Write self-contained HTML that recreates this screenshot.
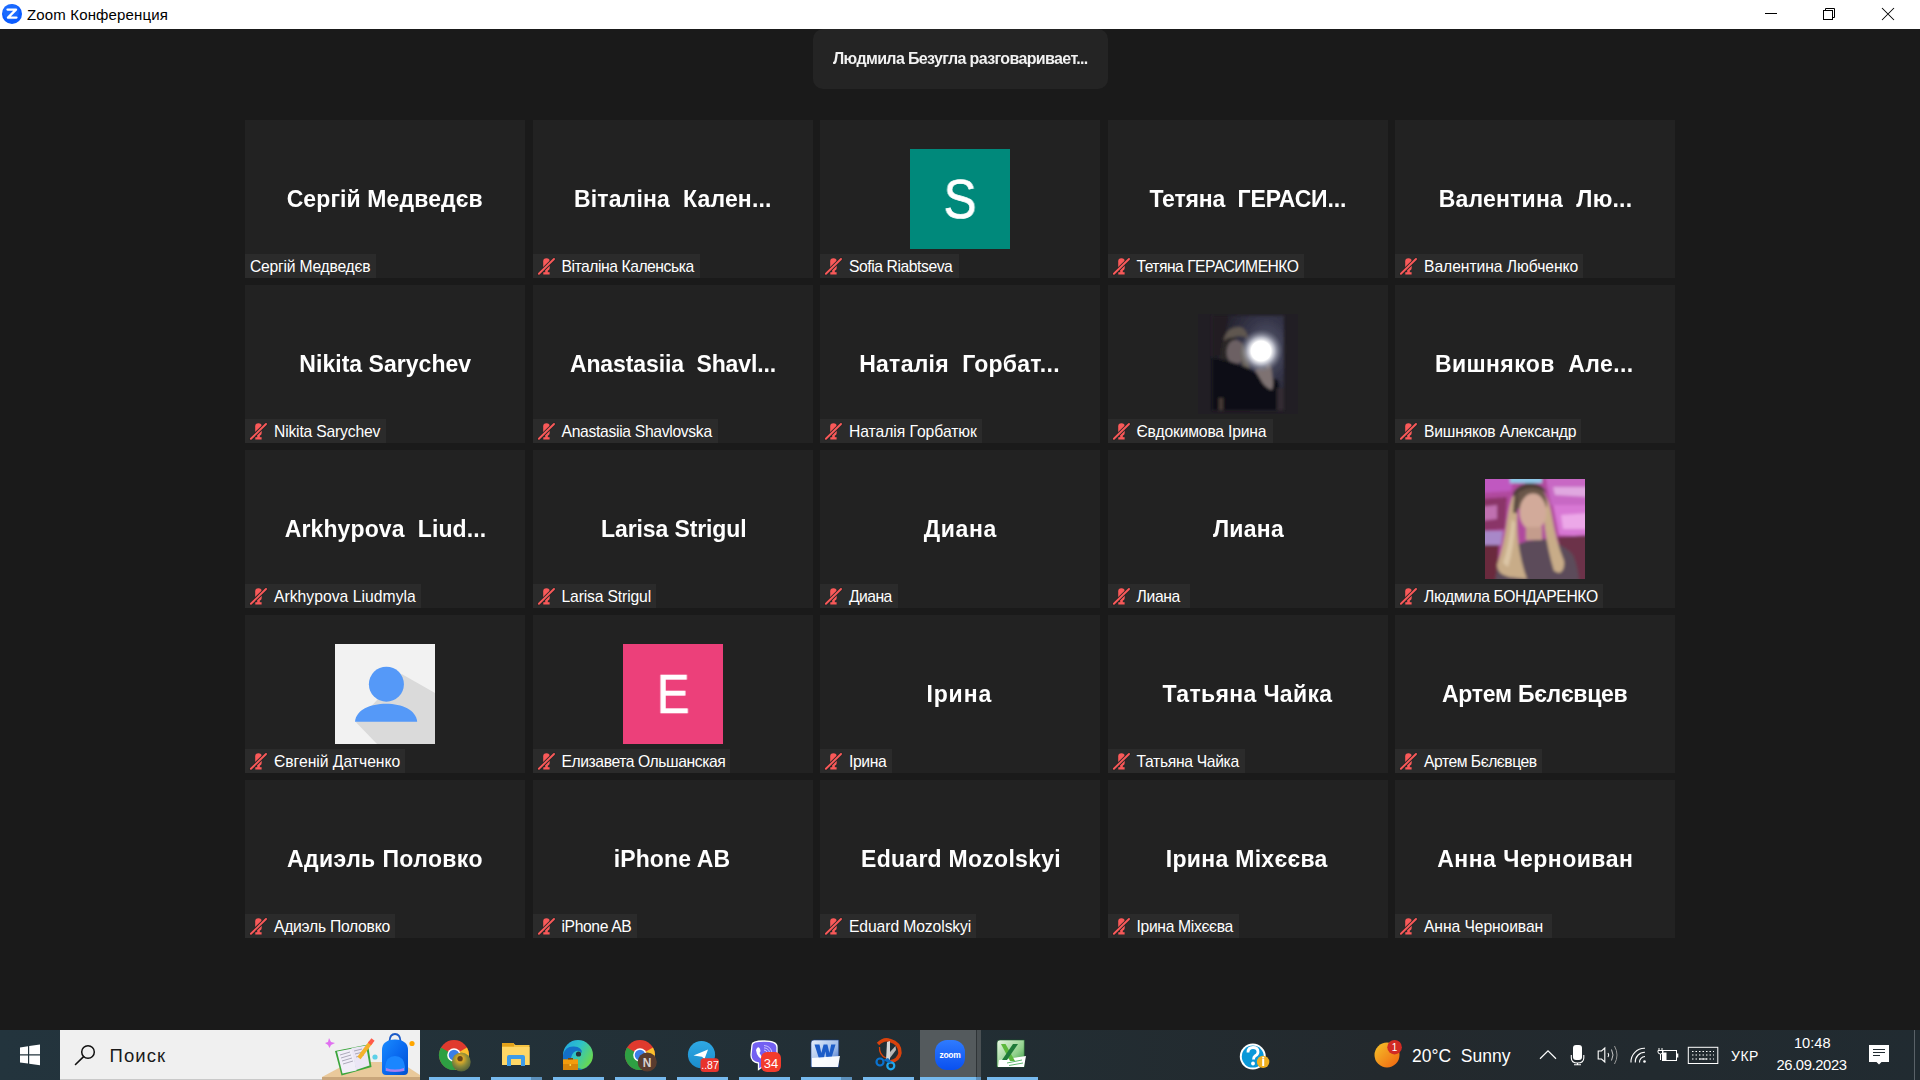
<!DOCTYPE html>
<html><head><meta charset="utf-8">
<style>
*{box-sizing:border-box;margin:0;padding:0}
html,body{width:1920px;height:1080px;overflow:hidden;background:#1a1a1a;font-family:"Liberation Sans",sans-serif}
#title{position:absolute;left:0;top:0;width:1920px;height:29px;background:#fff}
#title .zi{display:none;position:absolute;left:3px;top:5px;width:19px;height:19px;border-radius:50%;background:radial-gradient(circle at 40% 35%,#3c8cff,#0b5cff 60%,#0040d0)}
#title .tt{position:absolute;left:27px;top:6px;font-size:15px;color:#000;white-space:nowrap;letter-spacing:0.15px}
#title .wc{position:absolute;top:0}
#banner{position:absolute;left:813px;top:29px;width:295px;height:60px;background:#242424;border-radius:10px}
#banner span{position:absolute;left:20px;top:21px;font-size:16px;font-weight:bold;color:#f2f2f2;white-space:nowrap;letter-spacing:-0.63px;will-change:transform}
.tile{position:absolute;width:280px;height:157.5px;background:#222}
.big{position:absolute;left:0;right:0;top:66px;text-align:center;font-size:23px;font-weight:bold;color:#fff;white-space:nowrap;line-height:26px;will-change:transform}
.lab{position:absolute;left:0;bottom:0;height:24px;background:#2b2b2b;padding:0 5px 0 5px;display:flex;align-items:center;white-space:nowrap}
.lab span{font-size:15.7px;color:#fff;line-height:24px;position:relative;top:1px}
.lab .mic{margin-right:5px;margin-left:-5px;flex-shrink:0}
.av{position:absolute;left:90px;top:29px;width:100px;height:100px;overflow:hidden}
.av span{position:absolute;left:0;right:0;top:20px;text-align:center;font-size:55px;color:#fff;line-height:60px;transform:scaleX(0.9);-webkit-text-stroke:0.7px #fff;will-change:transform}
#taskbar{position:absolute;left:0;top:1030px;width:1920px;height:50px;background:#212d33}
.tbt{position:absolute;white-space:nowrap;line-height:1;margin-top:-1030px}
</style></head><body>
<div id="title">
 <div class="zi"></div>
 <svg style="position:absolute;left:0;top:0" width="30" height="29"><circle cx="12" cy="13.9" r="10" fill="#0b5cff"/><circle cx="11" cy="12" r="8" fill="#2a78ff" opacity="0.5"/><path d="M7.5 9.6 L16 9.6 L8 17.6 L16.5 17.6" stroke="#fff" stroke-width="2.3" fill="none" stroke-linejoin="round" stroke-linecap="round"/></svg>
 <div class="tt">Zoom Конференция</div>
 <svg style="position:absolute;left:1750px;top:0" width="170" height="29" viewBox="1750 0 170 29">
  <rect x="1765" y="13" width="12" height="1" fill="#000"/>
  <path d="M1825.5 10.5 L1825.5 8.5 L1834.5 8.5 L1834.5 17.5 L1832.5 17.5" stroke="#000" stroke-width="1" fill="none"/>
  <rect x="1823.5" y="10.5" width="9" height="9" stroke="#000" stroke-width="1" fill="none"/>
  <path d="M1882 8 L1894 20 M1894 8 L1882 20" stroke="#000" stroke-width="1.05"/>
 </svg>
</div>
<div id="banner"><span>Людмила Безугла разговаривает...</span></div>
<div class="tile" style="left:245.0px;top:120px"><div class="big" style="letter-spacing:0.107px;transform:translateX(-0.25px)">Сергій Медведєв</div><div class="lab" style="width:131.00px"><span style="letter-spacing:-0.241px">Сергій Медведєв</span></div></div>
<div class="tile" style="left:532.5px;top:120px"><div class="big" style="letter-spacing:0.156px;transform:translateX(-0.25px)">Віталіна&nbsp; Кален...</div><div class="lab" style="width:167.10px"><svg class="mic" width="24" height="24" viewBox="0 0.1 24 24"><rect x="10.2" y="4.3" width="6.5" height="12.6" rx="3.2" fill="#fa5959"/><rect x="12.2" y="15" width="2.6" height="4" fill="#fa5959"/><rect x="10.3" y="18.3" width="6.3" height="2.3" fill="#fa5959"/><path d="M5.9 19.9L21 5.1" stroke="#262626" stroke-width="3.8" stroke-linecap="round"/><path d="M5.9 19.9L21 5.1" stroke="#fa5959" stroke-width="1.9" stroke-linecap="round"/></svg><span style="letter-spacing:-0.457px">Віталіна Каленська</span></div></div>
<div class="tile" style="left:820.0px;top:120px"><div class="av" style="background:#00897b"><span>S</span></div><div class="lab" style="width:138.75px"><svg class="mic" width="24" height="24" viewBox="0 0.1 24 24"><rect x="10.2" y="4.3" width="6.5" height="12.6" rx="3.2" fill="#fa5959"/><rect x="12.2" y="15" width="2.6" height="4" fill="#fa5959"/><rect x="10.3" y="18.3" width="6.3" height="2.3" fill="#fa5959"/><path d="M5.9 19.9L21 5.1" stroke="#262626" stroke-width="3.8" stroke-linecap="round"/><path d="M5.9 19.9L21 5.1" stroke="#fa5959" stroke-width="1.9" stroke-linecap="round"/></svg><span style="letter-spacing:-0.431px">Sofia Riabtseva</span></div></div>
<div class="tile" style="left:1107.5px;top:120px"><div class="big" style="letter-spacing:-0.167px;transform:translateX(-0.25px)">Тетяна&nbsp; ГЕРАСИ...</div><div class="lab" style="width:196.50px"><svg class="mic" width="24" height="24" viewBox="0 0.1 24 24"><rect x="10.2" y="4.3" width="6.5" height="12.6" rx="3.2" fill="#fa5959"/><rect x="12.2" y="15" width="2.6" height="4" fill="#fa5959"/><rect x="10.3" y="18.3" width="6.3" height="2.3" fill="#fa5959"/><path d="M5.9 19.9L21 5.1" stroke="#262626" stroke-width="3.8" stroke-linecap="round"/><path d="M5.9 19.9L21 5.1" stroke="#fa5959" stroke-width="1.9" stroke-linecap="round"/></svg><span style="letter-spacing:-0.526px">Тетяна ГЕРАСИМЕНКО</span></div></div>
<div class="tile" style="left:1395.0px;top:120px"><div class="big" style="letter-spacing:0.214px;transform:translateX(0.50px)">Валентина&nbsp; Лю...</div><div class="lab" style="width:188.00px"><svg class="mic" width="24" height="24" viewBox="0 0.1 24 24"><rect x="10.2" y="4.3" width="6.5" height="12.6" rx="3.2" fill="#fa5959"/><rect x="12.2" y="15" width="2.6" height="4" fill="#fa5959"/><rect x="10.3" y="18.3" width="6.3" height="2.3" fill="#fa5959"/><path d="M5.9 19.9L21 5.1" stroke="#262626" stroke-width="3.8" stroke-linecap="round"/><path d="M5.9 19.9L21 5.1" stroke="#fa5959" stroke-width="1.9" stroke-linecap="round"/></svg><span style="letter-spacing:-0.063px">Валентина Любченко</span></div></div>
<div class="tile" style="left:245.0px;top:285px"><div class="big" style="letter-spacing:0.036px;transform:translateX(0.25px)">Nikita Sarychev</div><div class="lab" style="width:140.75px"><svg class="mic" width="24" height="24" viewBox="0 0.1 24 24"><rect x="10.2" y="4.3" width="6.5" height="12.6" rx="3.2" fill="#fa5959"/><rect x="12.2" y="15" width="2.6" height="4" fill="#fa5959"/><rect x="10.3" y="18.3" width="6.3" height="2.3" fill="#fa5959"/><path d="M5.9 19.9L21 5.1" stroke="#262626" stroke-width="3.8" stroke-linecap="round"/><path d="M5.9 19.9L21 5.1" stroke="#fa5959" stroke-width="1.9" stroke-linecap="round"/></svg><span style="letter-spacing:-0.190px">Nikita Sarychev</span></div></div>
<div class="tile" style="left:532.5px;top:285px"><div class="big" style="letter-spacing:-0.111px;transform:translateX(-0.00px)">Anastasiia&nbsp; Shavl...</div><div class="lab" style="width:185.00px"><svg class="mic" width="24" height="24" viewBox="0 0.1 24 24"><rect x="10.2" y="4.3" width="6.5" height="12.6" rx="3.2" fill="#fa5959"/><rect x="12.2" y="15" width="2.6" height="4" fill="#fa5959"/><rect x="10.3" y="18.3" width="6.3" height="2.3" fill="#fa5959"/><path d="M5.9 19.9L21 5.1" stroke="#262626" stroke-width="3.8" stroke-linecap="round"/><path d="M5.9 19.9L21 5.1" stroke="#fa5959" stroke-width="1.9" stroke-linecap="round"/></svg><span style="letter-spacing:-0.317px">Anastasiia Shavlovska</span></div></div>
<div class="tile" style="left:820.0px;top:285px"><div class="big" style="letter-spacing:0.250px;transform:translateX(-0.50px)">Наталія&nbsp; Горбат...</div><div class="lab" style="width:161.75px"><svg class="mic" width="24" height="24" viewBox="0 0.1 24 24"><rect x="10.2" y="4.3" width="6.5" height="12.6" rx="3.2" fill="#fa5959"/><rect x="12.2" y="15" width="2.6" height="4" fill="#fa5959"/><rect x="10.3" y="18.3" width="6.3" height="2.3" fill="#fa5959"/><path d="M5.9 19.9L21 5.1" stroke="#262626" stroke-width="3.8" stroke-linecap="round"/><path d="M5.9 19.9L21 5.1" stroke="#fa5959" stroke-width="1.9" stroke-linecap="round"/></svg><span style="letter-spacing:-0.048px">Наталія Горбатюк</span></div></div>
<div class="tile" style="left:1107.5px;top:285px"><div class="av"><svg width="100" height="100" viewBox="0 0 100 100"><defs><filter id="bl1" x="-20%" y="-20%" width="140%" height="140%"><feGaussianBlur stdDeviation="1.5"/></filter><radialGradient id="fl1"><stop offset="0" stop-color="#fff"/><stop offset="0.45" stop-color="#fff"/><stop offset="0.62" stop-color="#d8dae4" stop-opacity="0.75"/><stop offset="1" stop-color="#6a6e80" stop-opacity="0"/></radialGradient><radialGradient id="sky1" cx="0.75" cy="0.35" r="0.7"><stop offset="0" stop-color="#5c5e72"/><stop offset="0.45" stop-color="#36364a"/><stop offset="1" stop-color="#1e1c24"/></radialGradient></defs><rect width="100" height="100" fill="#211e24"/><g filter="url(#bl1)"><rect x="14" y="1.5" width="72" height="95" fill="url(#sky1)"/><path d="M14 1.5 L30 1.5 L26 40 L14 42 Z" fill="#231a20"/><path d="M26 24 Q30 12 42 13 Q50 15 50 26 Q48 22 40 22 Q30 24 26 34 Z" fill="#5e5650"/><path d="M24 30 Q28 22 38 24 L30 50 L22 48 Z" fill="#2a2626"/><ellipse cx="37.5" cy="38" rx="9" ry="12" fill="#6c6064"/><path d="M44 28 Q50 42 52 56 Q54 64 52 68 L47 66 Q45 52 42 40 Z" fill="#6a645c"/><path d="M14 44 Q30 46 40 50 L50 54 L60 60 L80 66 L86 96 L14 96 Z" fill="#0d1018"/><path d="M57 56 Q62 53 67 55 L70 49 Q74 52 74 60 Q76 70 74 76 Q68 74 64 68 Z" fill="#7e7272"/><rect x="79" y="74" width="7" height="22" fill="#302c30"/><rect x="21" y="84" width="4" height="12" fill="#463a36"/></g><circle cx="63" cy="37" r="22" fill="url(#fl1)"/></svg></div><div class="lab" style="width:165.00px"><svg class="mic" width="24" height="24" viewBox="0 0.1 24 24"><rect x="10.2" y="4.3" width="6.5" height="12.6" rx="3.2" fill="#fa5959"/><rect x="12.2" y="15" width="2.6" height="4" fill="#fa5959"/><rect x="10.3" y="18.3" width="6.3" height="2.3" fill="#fa5959"/><path d="M5.9 19.9L21 5.1" stroke="#262626" stroke-width="3.8" stroke-linecap="round"/><path d="M5.9 19.9L21 5.1" stroke="#fa5959" stroke-width="1.9" stroke-linecap="round"/></svg><span style="letter-spacing:-0.194px">Євдокимова Ірина</span></div></div>
<div class="tile" style="left:1395.0px;top:285px"><div class="big" style="letter-spacing:0.393px;transform:translateX(-0.75px)">Вишняков&nbsp; Але...</div><div class="lab" style="width:186.00px"><svg class="mic" width="24" height="24" viewBox="0 0.1 24 24"><rect x="10.2" y="4.3" width="6.5" height="12.6" rx="3.2" fill="#fa5959"/><rect x="12.2" y="15" width="2.6" height="4" fill="#fa5959"/><rect x="10.3" y="18.3" width="6.3" height="2.3" fill="#fa5959"/><path d="M5.9 19.9L21 5.1" stroke="#262626" stroke-width="3.8" stroke-linecap="round"/><path d="M5.9 19.9L21 5.1" stroke="#fa5959" stroke-width="1.9" stroke-linecap="round"/></svg><span style="letter-spacing:-0.200px">Вишняков Александр</span></div></div>
<div class="tile" style="left:245.0px;top:450px"><div class="big" style="letter-spacing:0.125px;transform:translateX(0.50px)">Arkhypova&nbsp; Liud...</div><div class="lab" style="width:175.50px"><svg class="mic" width="24" height="24" viewBox="0 0.1 24 24"><rect x="10.2" y="4.3" width="6.5" height="12.6" rx="3.2" fill="#fa5959"/><rect x="12.2" y="15" width="2.6" height="4" fill="#fa5959"/><rect x="10.3" y="18.3" width="6.3" height="2.3" fill="#fa5959"/><path d="M5.9 19.9L21 5.1" stroke="#262626" stroke-width="3.8" stroke-linecap="round"/><path d="M5.9 19.9L21 5.1" stroke="#fa5959" stroke-width="1.9" stroke-linecap="round"/></svg><span style="letter-spacing:0.029px">Arkhypova Liudmyla</span></div></div>
<div class="tile" style="left:532.5px;top:450px"><div class="big" style="letter-spacing:-0.115px;transform:translateX(0.75px)">Larisa Strigul</div><div class="lab" style="width:123.00px"><svg class="mic" width="24" height="24" viewBox="0 0.1 24 24"><rect x="10.2" y="4.3" width="6.5" height="12.6" rx="3.2" fill="#fa5959"/><rect x="12.2" y="15" width="2.6" height="4" fill="#fa5959"/><rect x="10.3" y="18.3" width="6.3" height="2.3" fill="#fa5959"/><path d="M5.9 19.9L21 5.1" stroke="#262626" stroke-width="3.8" stroke-linecap="round"/><path d="M5.9 19.9L21 5.1" stroke="#fa5959" stroke-width="1.9" stroke-linecap="round"/></svg><span style="letter-spacing:-0.148px">Larisa Strigul</span></div></div>
<div class="tile" style="left:820.0px;top:450px"><div class="big" style="letter-spacing:0.625px;transform:translateX(0.25px)">Диана</div><div class="lab" style="width:78.00px"><svg class="mic" width="24" height="24" viewBox="0 0.1 24 24"><rect x="10.2" y="4.3" width="6.5" height="12.6" rx="3.2" fill="#fa5959"/><rect x="12.2" y="15" width="2.6" height="4" fill="#fa5959"/><rect x="10.3" y="18.3" width="6.3" height="2.3" fill="#fa5959"/><path d="M5.9 19.9L21 5.1" stroke="#262626" stroke-width="3.8" stroke-linecap="round"/><path d="M5.9 19.9L21 5.1" stroke="#fa5959" stroke-width="1.9" stroke-linecap="round"/></svg><span style="letter-spacing:-0.556px">Диана</span></div></div>
<div class="tile" style="left:1107.5px;top:450px"><div class="big" style="letter-spacing:0.250px;transform:translateX(0.50px)">Лиана</div><div class="lab" style="width:82.00px"><svg class="mic" width="24" height="24" viewBox="0 0.1 24 24"><rect x="10.2" y="4.3" width="6.5" height="12.6" rx="3.2" fill="#fa5959"/><rect x="12.2" y="15" width="2.6" height="4" fill="#fa5959"/><rect x="10.3" y="18.3" width="6.3" height="2.3" fill="#fa5959"/><path d="M5.9 19.9L21 5.1" stroke="#262626" stroke-width="3.8" stroke-linecap="round"/><path d="M5.9 19.9L21 5.1" stroke="#fa5959" stroke-width="1.9" stroke-linecap="round"/></svg><span style="letter-spacing:-0.333px">Лиана</span></div></div>
<div class="tile" style="left:1395.0px;top:450px"><div class="av"><svg width="100" height="100" viewBox="0 0 100 100"><defs><filter id="bl2" x="-20%" y="-20%" width="140%" height="140%"><feGaussianBlur stdDeviation="1.6"/></filter></defs><g filter="url(#bl2)"><rect x="-5" y="-5" width="110" height="110" fill="#b04a9e"/><path d="M-5 -5 L30 -5 L26 12 L-5 14 Z" fill="#c058c0"/><path d="M-5 20 L22 18 L20 50 L-5 52 Z" fill="#8a3468"/><path d="M-5 28 L12 26 L12 40 L-5 42 Z" fill="#c070b0"/><path d="M-5 52 L18 52 L16 66 L-5 66 Z" fill="#a888c8"/><path d="M-5 66 L14 66 L12 105 L-5 105 Z" fill="#6a2a3c"/><rect x="25" y="-5" width="32" height="9" fill="#90c8e8"/><path d="M60 -5 L105 -5 L105 30 L66 26 Z" fill="#c868c4"/><path d="M68 8 L105 8 L105 18 L70 16 Z" fill="#e0a8e0"/><path d="M68 26 L105 26 L105 58 L74 56 Z" fill="#d878d4"/><path d="M76 36 L105 34 L105 50 L78 50 Z" fill="#eca8e8"/><path d="M72 58 L105 56 L105 105 L86 105 Z" fill="#6c3048"/><path d="M10 105 Q12 80 22 72 Q34 64 42 62 L60 60 Q80 66 88 76 Q94 90 94 105 Z" fill="#5c4c5a"/><path d="M30 12 Q25 20 22 42 Q19 66 12 86 Q12 95 24 98 L42 100 Q36 84 33 62 Q31 40 33 20 Z" fill="#c8ac88"/><path d="M58 12 Q64 20 67 38 Q71 62 79 82 Q80 92 74 94 L69 92 Q63 72 60 50 Q58 30 56 16 Z" fill="#c8ac88"/><path d="M31 30 Q30 8 46 6 Q62 7 62 28 Z" fill="#6a5648"/><path d="M28 14 Q34 4 46 4 Q58 5 62 14 Q54 9 46 9 Q36 10 28 18 Z" fill="#4e3e38"/><path d="M29 20 Q30 14 34 12 L32 34 L28 34 Z" fill="#5a4a40"/><ellipse cx="48" cy="33" rx="13.5" ry="18.5" fill="#d2aa9a"/><rect x="41" y="48" width="16" height="13" fill="#c49c8c"/><path d="M27 40 Q24 66 18 84 L23 88 Q29 68 30 44 Z" fill="#dcc6a6"/></g></svg></div><div class="lab" style="width:208.00px"><svg class="mic" width="24" height="24" viewBox="0 0.1 24 24"><rect x="10.2" y="4.3" width="6.5" height="12.6" rx="3.2" fill="#fa5959"/><rect x="12.2" y="15" width="2.6" height="4" fill="#fa5959"/><rect x="10.3" y="18.3" width="6.3" height="2.3" fill="#fa5959"/><path d="M5.9 19.9L21 5.1" stroke="#262626" stroke-width="3.8" stroke-linecap="round"/><path d="M5.9 19.9L21 5.1" stroke="#fa5959" stroke-width="1.9" stroke-linecap="round"/></svg><span style="letter-spacing:-0.394px">Людмила БОНДАРЕНКО</span></div></div>
<div class="tile" style="left:245.0px;top:615px"><div class="av" style="background:#f2f2f2"><svg width="100" height="100" viewBox="0 0 100 100"><path d="M66.7 29.9 L100 49 L100 100 L42 100 L21 78.3 Z" fill="#dadada"/><circle cx="51.4" cy="40.2" r="17.5" fill="#5599f8"/><path d="M20 77.8 C21 66 35 59.8 51.2 59.8 C67 59.8 81 66 82.2 77.8 Z" fill="#5599f8"/></svg></div><div class="lab" style="width:159.50px"><svg class="mic" width="24" height="24" viewBox="0 0.1 24 24"><rect x="10.2" y="4.3" width="6.5" height="12.6" rx="3.2" fill="#fa5959"/><rect x="12.2" y="15" width="2.6" height="4" fill="#fa5959"/><rect x="10.3" y="18.3" width="6.3" height="2.3" fill="#fa5959"/><path d="M5.9 19.9L21 5.1" stroke="#262626" stroke-width="3.8" stroke-linecap="round"/><path d="M5.9 19.9L21 5.1" stroke="#fa5959" stroke-width="1.9" stroke-linecap="round"/></svg><span style="letter-spacing:-0.016px">Євгеній Датченко</span></div></div>
<div class="tile" style="left:532.5px;top:615px"><div class="av" style="background:#ec407a"><span>E</span></div><div class="lab" style="width:197.70px"><svg class="mic" width="24" height="24" viewBox="0 0.1 24 24"><rect x="10.2" y="4.3" width="6.5" height="12.6" rx="3.2" fill="#fa5959"/><rect x="12.2" y="15" width="2.6" height="4" fill="#fa5959"/><rect x="10.3" y="18.3" width="6.3" height="2.3" fill="#fa5959"/><path d="M5.9 19.9L21 5.1" stroke="#262626" stroke-width="3.8" stroke-linecap="round"/><path d="M5.9 19.9L21 5.1" stroke="#fa5959" stroke-width="1.9" stroke-linecap="round"/></svg><span style="letter-spacing:-0.426px">Елизавета Ольшанская</span></div></div>
<div class="tile" style="left:820.0px;top:615px"><div class="big" style="letter-spacing:0.875px;transform:translateX(-0.75px)">Ірина</div><div class="lab" style="width:71.75px"><svg class="mic" width="24" height="24" viewBox="0 0.1 24 24"><rect x="10.2" y="4.3" width="6.5" height="12.6" rx="3.2" fill="#fa5959"/><rect x="12.2" y="15" width="2.6" height="4" fill="#fa5959"/><rect x="10.3" y="18.3" width="6.3" height="2.3" fill="#fa5959"/><path d="M5.9 19.9L21 5.1" stroke="#262626" stroke-width="3.8" stroke-linecap="round"/><path d="M5.9 19.9L21 5.1" stroke="#fa5959" stroke-width="1.9" stroke-linecap="round"/></svg><span style="letter-spacing:-0.389px">Ірина</span></div></div>
<div class="tile" style="left:1107.5px;top:615px"><div class="big" style="letter-spacing:0.333px;transform:translateX(-0.50px)">Татьяна Чайка</div><div class="lab" style="width:137.00px"><svg class="mic" width="24" height="24" viewBox="0 0.1 24 24"><rect x="10.2" y="4.3" width="6.5" height="12.6" rx="3.2" fill="#fa5959"/><rect x="12.2" y="15" width="2.6" height="4" fill="#fa5959"/><rect x="10.3" y="18.3" width="6.3" height="2.3" fill="#fa5959"/><path d="M5.9 19.9L21 5.1" stroke="#262626" stroke-width="3.8" stroke-linecap="round"/><path d="M5.9 19.9L21 5.1" stroke="#fa5959" stroke-width="1.9" stroke-linecap="round"/></svg><span style="letter-spacing:-0.340px">Татьяна Чайка</span></div></div>
<div class="tile" style="left:1395.0px;top:615px"><div class="big" style="letter-spacing:-0.269px;transform:translateX(-0.25px)">Артем Бєлєвцев</div><div class="lab" style="width:146.80px"><svg class="mic" width="24" height="24" viewBox="0 0.1 24 24"><rect x="10.2" y="4.3" width="6.5" height="12.6" rx="3.2" fill="#fa5959"/><rect x="12.2" y="15" width="2.6" height="4" fill="#fa5959"/><rect x="10.3" y="18.3" width="6.3" height="2.3" fill="#fa5959"/><path d="M5.9 19.9L21 5.1" stroke="#262626" stroke-width="3.8" stroke-linecap="round"/><path d="M5.9 19.9L21 5.1" stroke="#fa5959" stroke-width="1.9" stroke-linecap="round"/></svg><span style="letter-spacing:-0.481px">Артем Бєлєвцев</span></div></div>
<div class="tile" style="left:245.0px;top:780px"><div class="big" style="letter-spacing:0.385px;transform:translateX(-0.00px)">Адиэль Половко</div><div class="lab" style="width:150.00px"><svg class="mic" width="24" height="24" viewBox="0 0.1 24 24"><rect x="10.2" y="4.3" width="6.5" height="12.6" rx="3.2" fill="#fa5959"/><rect x="12.2" y="15" width="2.6" height="4" fill="#fa5959"/><rect x="10.3" y="18.3" width="6.3" height="2.3" fill="#fa5959"/><path d="M5.9 19.9L21 5.1" stroke="#262626" stroke-width="3.8" stroke-linecap="round"/><path d="M5.9 19.9L21 5.1" stroke="#fa5959" stroke-width="1.9" stroke-linecap="round"/></svg><span style="letter-spacing:-0.259px">Адиэль Половко</span></div></div>
<div class="tile" style="left:532.5px;top:780px"><div class="big" style="letter-spacing:0.125px;transform:translateX(-1.00px)">iPhone AB</div><div class="lab" style="width:104.25px"><svg class="mic" width="24" height="24" viewBox="0 0.1 24 24"><rect x="10.2" y="4.3" width="6.5" height="12.6" rx="3.2" fill="#fa5959"/><rect x="12.2" y="15" width="2.6" height="4" fill="#fa5959"/><rect x="10.3" y="18.3" width="6.3" height="2.3" fill="#fa5959"/><path d="M5.9 19.9L21 5.1" stroke="#262626" stroke-width="3.8" stroke-linecap="round"/><path d="M5.9 19.9L21 5.1" stroke="#fa5959" stroke-width="1.9" stroke-linecap="round"/></svg><span style="letter-spacing:-0.382px">iPhone AB</span></div></div>
<div class="tile" style="left:820.0px;top:780px"><div class="big" style="letter-spacing:0.267px;transform:translateX(1.00px)">Eduard Mozolskyi</div><div class="lab" style="width:155.50px"><svg class="mic" width="24" height="24" viewBox="0 0.1 24 24"><rect x="10.2" y="4.3" width="6.5" height="12.6" rx="3.2" fill="#fa5959"/><rect x="12.2" y="15" width="2.6" height="4" fill="#fa5959"/><rect x="10.3" y="18.3" width="6.3" height="2.3" fill="#fa5959"/><path d="M5.9 19.9L21 5.1" stroke="#262626" stroke-width="3.8" stroke-linecap="round"/><path d="M5.9 19.9L21 5.1" stroke="#fa5959" stroke-width="1.9" stroke-linecap="round"/></svg><span style="letter-spacing:-0.097px">Eduard Mozolskyi</span></div></div>
<div class="tile" style="left:1107.5px;top:780px"><div class="big" style="letter-spacing:0.292px;transform:translateX(-1.25px)">Ірина Міхєєва</div><div class="lab" style="width:131.25px"><svg class="mic" width="24" height="24" viewBox="0 0.1 24 24"><rect x="10.2" y="4.3" width="6.5" height="12.6" rx="3.2" fill="#fa5959"/><rect x="12.2" y="15" width="2.6" height="4" fill="#fa5959"/><rect x="10.3" y="18.3" width="6.3" height="2.3" fill="#fa5959"/><path d="M5.9 19.9L21 5.1" stroke="#262626" stroke-width="3.8" stroke-linecap="round"/><path d="M5.9 19.9L21 5.1" stroke="#fa5959" stroke-width="1.9" stroke-linecap="round"/></svg><span style="letter-spacing:-0.340px">Ірина Міхєєва</span></div></div>
<div class="tile" style="left:1395.0px;top:780px"><div class="big" style="letter-spacing:0.500px;transform:translateX(0.25px)">Анна Черноиван</div><div class="lab" style="width:157.00px"><svg class="mic" width="24" height="24" viewBox="0 0.1 24 24"><rect x="10.2" y="4.3" width="6.5" height="12.6" rx="3.2" fill="#fa5959"/><rect x="12.2" y="15" width="2.6" height="4" fill="#fa5959"/><rect x="10.3" y="18.3" width="6.3" height="2.3" fill="#fa5959"/><path d="M5.9 19.9L21 5.1" stroke="#262626" stroke-width="3.8" stroke-linecap="round"/><path d="M5.9 19.9L21 5.1" stroke="#fa5959" stroke-width="1.9" stroke-linecap="round"/></svg><span style="letter-spacing:-0.096px">Анна Черноиван</span></div></div>
<div id="taskbar">
 <svg style="position:absolute;left:0;top:0" width="1920" height="50" viewBox="0 1030 1920 50">
  <defs>
   <linearGradient id="tbg" x1="0" x2="1" y1="0" y2="0">
    <stop offset="0" stop-color="#23343d"/><stop offset="0.5" stop-color="#222e34"/><stop offset="0.72" stop-color="#23292d"/><stop offset="1" stop-color="#212b31"/>
   </linearGradient>
   <radialGradient id="sunfl" cx="0.45" cy="0.35" r="0.7">
    <stop offset="0" stop-color="#6b4a1a"/><stop offset="0.25" stop-color="#d8a82a"/><stop offset="0.55" stop-color="#8a8a3a"/><stop offset="1" stop-color="#4a5a3a"/>
   </radialGradient>
   <linearGradient id="edgeg" x1="0" y1="0" x2="1" y2="0.6">
    <stop offset="0" stop-color="#1fa2e6"/><stop offset="0.5" stop-color="#2ec3c8"/><stop offset="1" stop-color="#6ad84e"/>
   </linearGradient>
   <linearGradient id="tgg" x1="0" y1="0" x2="0" y2="1">
    <stop offset="0" stop-color="#2fa8e4"/><stop offset="1" stop-color="#1a8ccc"/>
   </linearGradient>
   <linearGradient id="sung" x1="0" y1="0" x2="1" y2="1">
    <stop offset="0" stop-color="#f5c42a"/><stop offset="1" stop-color="#f0620f"/>
   </linearGradient>
   <linearGradient id="bpg" x1="0" y1="0" x2="1" y2="1">
    <stop offset="0" stop-color="#1a8cff"/><stop offset="0.5" stop-color="#0a6af0"/><stop offset="1" stop-color="#0050d0"/>
   </linearGradient>
   <linearGradient id="wordg" x1="0" y1="0" x2="1" y2="1">
    <stop offset="0" stop-color="#e8f0fb"/><stop offset="0.6" stop-color="#9ab8e8"/><stop offset="1" stop-color="#2a5cc0"/>
   </linearGradient>
   <linearGradient id="xlg" x1="0" y1="0" x2="1" y2="1">
    <stop offset="0" stop-color="#eaf6e6"/><stop offset="0.6" stop-color="#8fd08a"/><stop offset="1" stop-color="#2a8a3a"/>
   </linearGradient>
   <linearGradient id="zmg" x1="0" y1="0" x2="0" y2="1">
    <stop offset="0" stop-color="#2f7bff"/><stop offset="1" stop-color="#0950f0"/>
   </linearGradient>
  </defs>
  <rect x="0" y="1030" width="1920" height="50" fill="url(#tbg)"/>
  <!-- windows logo -->
  <path d="M20 1047.5 L28 1046.3 L28 1054.3 L20 1054.3 Z M29.2 1046.1 L40 1044.6 L40 1054.3 L29.2 1054.3 Z M20 1055.5 L28 1055.5 L28 1063.6 L20 1062.4 Z M29.2 1055.5 L40 1055.5 L40 1065.2 L29.2 1063.8 Z" fill="#fff"/>
  <!-- search box -->
  <rect x="60" y="1030" width="360" height="50" fill="#f0f0f0"/>
  <rect x="60" y="1079" width="360" height="1" fill="#c9c9c9"/>
  <circle cx="88" cy="1052" r="6.3" fill="none" stroke="#111" stroke-width="1.5"/>
  <path d="M83.6 1056.6 L75.5 1064.5" stroke="#111" stroke-width="1.6" stroke-linecap="round"/>
  <!-- search illustration -->
  <path d="M322 1080 L322 1077 L350 1062 L400 1062 L420 1075 L420 1080 Z" fill="#e9c99b"/>
  <rect x="322" y="1077" width="98" height="3" fill="#c9a67b"/>
  <path d="M335 1051 L368 1044.5 L371.5 1067 L341.5 1075.5 Z" fill="#3aa53a"/>
  <path d="M337 1051.5 L352.5 1048.5 L356.5 1070.5 L342.5 1073.5 Z" fill="#f1eef8"/>
  <path d="M351.5 1048 L366 1045.5 L369.5 1065.5 L356 1070 Z" fill="#ebe6f5"/>
  <path d="M340 1055 L350 1052 M341 1058 L351 1055 M342 1061 L352 1058 M343 1064 L353 1061 M354 1051 L362 1049 M355 1054 L363 1052 M356 1057 L364 1055" stroke="#9a98aa" stroke-width="0.8"/>
  <path d="M359 1058 L371 1042" stroke="#f5b22a" stroke-width="4" stroke-linecap="butt"/>
  <path d="M369.5 1044 L373 1039.5" stroke="#ff5a4a" stroke-width="4"/>
  <path d="M329 1038 L331 1042 L335 1043 L331 1045 L329.5 1048 L328 1045 L325 1043 L328 1042 Z" fill="#e070f0"/>
  <circle cx="375" cy="1057" r="2.6" fill="#5cd0e8"/>
  <circle cx="412" cy="1043.5" r="2.6" fill="#ffa600"/>
  <path d="M389.5 1041 Q390 1034 395 1034 Q400 1034 400.5 1041" stroke="#1a5ac8" stroke-width="1.8" fill="none"/>
  <path d="M382 1050 Q382 1040 395 1039.5 Q408 1040 408 1050 L408 1071 Q408 1075 404 1075 L386 1075 Q382 1075 382 1071 Z" fill="url(#bpg)"/>
  <path d="M385 1067 Q386 1056 395 1056 Q404 1056 405 1067 L405 1071 L385 1071 Z" fill="#1a86ff"/>
  <path d="M386 1068 Q395 1071 404 1068 L404 1071 Q395 1073 386 1071 Z" fill="#c080f0" opacity="0.85"/>

  <!-- underlines -->
  <g fill="#76b9ed">
   <rect x="429" y="1077" width="51" height="3"/>
   <rect x="491" y="1077" width="40" height="3"/>
   <rect x="531" y="1077" width="11" height="3" fill="#5b8fba"/>
   <rect x="553" y="1077" width="51" height="3"/>
   <rect x="615" y="1077" width="51" height="3"/>
   <rect x="677" y="1077" width="51" height="3"/>
   <rect x="739" y="1077" width="51" height="3"/>
   <rect x="801" y="1077" width="40" height="3"/>
   <rect x="841" y="1077" width="11" height="3" fill="#5b8fba"/>
   <rect x="863" y="1077" width="51" height="3"/>
   <rect x="920" y="1077" width="56" height="3"/>
   <rect x="976" y="1077" width="5" height="3" fill="#5b8fba"/>
   <rect x="987" y="1077" width="51" height="3"/>
  </g>
  <!-- zoom active bg -->
  <rect x="920" y="1030" width="56" height="47" fill="#545a5d"/>
  <rect x="976" y="1030" width="1" height="47" fill="#2f3437"/>
  <rect x="977" y="1030" width="4" height="47" fill="#4a5053"/>

  <!-- chrome 1 -->
  <g id="chrome">
   <circle cx="454" cy="1055" r="15" fill="#e03a2e"/>
   <path d="M454 1055 L467 1047.5 A15 15 0 0 1 455.5 1070 Z" fill="#fbc02d"/>
   <path d="M454 1055 L455.5 1070 A15 15 0 0 1 441 1047.5 Z" fill="#2ea043"/>
   <circle cx="454" cy="1055" r="6.8" fill="#fff"/>
   <circle cx="454" cy="1055" r="5.3" fill="#3b7ee8"/>
  </g>
  <circle cx="461.3" cy="1062" r="9.4" fill="url(#sunfl)"/>
  <circle cx="460" cy="1058.5" r="2.6" fill="#6a4518"/>
  <!-- folder -->
  <path d="M502 1044 Q502 1043 503 1043 L513 1043 L515.5 1045 L529.5 1045 L529.5 1065 L502 1065 Z" fill="#f5c342"/>
  <rect x="502" y="1043" width="12" height="3.5" fill="#e3a21a"/>
  <rect x="502" y="1047" width="27.5" height="18" fill="#ffd766"/>
  <path d="M507 1066 L507 1057 Q507 1055 509 1055 L523 1055 Q525 1055 525 1057 L525 1066 L521 1066 L521 1059 L511 1059 L511 1066 Z" fill="#3d9be8"/>
  <!-- edge -->
  <circle cx="578" cy="1055" r="15" fill="url(#edgeg)"/>
  <path d="M563 1055 Q565 1046 574 1046.5 Q582 1047 582 1053 Q579 1050 576 1051 Q571 1053 571 1060 Q572 1068 582 1069 Q588 1068.5 590.5 1063 Q586 1070 578 1070 Q565 1070 563 1058 Z" fill="#1470c8"/>
  <circle cx="578.5" cy="1054" r="2.6" fill="#263238"/>
  <path d="M563 1059.5 L578 1059.5 L578 1070 L563 1070 Z" fill="#d9860a"/>
  <rect x="563" y="1059.5" width="15" height="4.5" fill="#f49c0c"/>
  <rect x="568" y="1058" width="5" height="1.5" fill="#7a4a08"/>
  <circle cx="570.3" cy="1065" r="0.9" fill="#ffe04a"/>
  <!-- chrome 2 -->
  <use href="#chrome" x="186"/>
  <circle cx="647.2" cy="1062" r="9.6" fill="#5a3c2e"/>
  <text x="647.2" y="1066.5" font-family="Liberation Sans" font-weight="bold" font-size="12" fill="#d8d0cc" text-anchor="middle">N</text>
  <!-- telegram -->
  <circle cx="701.5" cy="1054.7" r="13.6" fill="url(#tgg)"/>
  <path d="M693.5 1055.5 L708 1049.5 L704.5 1059 L702 1056.8 Z" fill="#fff"/>
  <rect x="700.5" y="1058.3" width="18.5" height="13.7" rx="3.5" fill="#e8342c"/>
  <text x="710" y="1069.3" font-family="Liberation Sans" font-size="10.5" fill="#fff" text-anchor="middle">..87</text>
  <!-- viber -->
  <path d="M752 1045 Q752 1041 764 1041 Q777 1041 777 1047 L777 1058 Q777 1063 767 1063.5 L758.5 1069.5 L758.5 1063 Q751 1062 751 1055 Z" fill="#7360f2" stroke="#fff" stroke-width="1.3"/>
  <path d="M757 1048 Q759 1046 760 1049 L760.5 1051 Q760 1052.5 759.5 1053 Q761 1056 763 1057.5 L764.5 1057 Q766 1056.5 767 1058.5 Q766 1060 764 1060 Q757 1058 756 1050 Z" fill="#fff"/>
  <path d="M764 1045.5 Q771 1046 772 1053 M764 1047.8 Q769 1048.3 769.7 1053 M764 1050 Q767 1050.5 767.5 1053" stroke="#d8d0ff" stroke-width="0.9" fill="none"/>
  <rect x="761" y="1052" width="20" height="20" rx="6" fill="#f23b2b"/>
  <text x="771" y="1067.5" font-family="Liberation Sans" font-size="13" fill="#fff" text-anchor="middle">34</text>
  <!-- word -->
  <path d="M814 1040 L838.7 1040 L838.7 1067 L811 1067 L811 1043 Q811 1040 814 1040 Z" fill="url(#wordg)" stroke="#1d3f8a" stroke-width="0.6"/>
  <path d="M814.5 1044.5 L819.5 1044.5 L821.3 1053 L823.6 1044.5 L827.4 1044.5 L829.4 1053 L831.2 1044.5 L835.5 1044.5 L831 1059.5 L826.8 1059.5 L825.4 1051.5 L823.4 1059.5 L819.3 1059.5 Z" fill="#1c5cc8"/>
  <path d="M812 1058 L840 1056 L838 1067 L812 1067 Z" fill="#fff" opacity="0.95"/>
  <!-- snipping -->
  <path d="M878 1044 Q884 1038 890 1040.5 Q900 1043 900 1053 Q899 1060 890 1062" stroke="#d9420c" stroke-width="3.4" fill="none"/>
  <path d="M879.5 1047 Q879 1055 886 1058" stroke="#d9420c" stroke-width="1.3" fill="none"/>
  <path d="M887 1042 L890 1041 L890 1060 L886 1061 Z" fill="#d8d8d8"/>
  <path d="M890 1052 L895.5 1046 L896 1050 L890 1058 Z" fill="#b8b8b8"/>
  <circle cx="880" cy="1062" r="3.5" fill="none" stroke="#0a72d0" stroke-width="2.2"/>
  <circle cx="890.8" cy="1065.8" r="3.5" fill="none" stroke="#1ea8f0" stroke-width="2.2"/>
  <path d="M883 1060 L888 1058 L892 1062 L889 1063 Z" fill="#0d6ac0"/>
  <!-- zoom -->
  <rect x="935" y="1040" width="30" height="30" rx="12" fill="url(#zmg)"/>
  <text x="950" y="1058" font-family="Liberation Sans" font-weight="bold" font-size="8.5" fill="#fff" text-anchor="middle" letter-spacing="-0.3">zoom</text>
  <!-- excel -->
  <path d="M1000 1040 L1024.3 1040 L1024.3 1067 L997 1067 L997 1043 Q997 1040 1000 1040 Z" fill="url(#xlg)" stroke="#1a5a2a" stroke-width="0.6"/>
  <path d="M999 1060 L1026 1056 L1024 1067 L998 1067 Z" fill="#fff"/>
  <path d="M1001 1044 L1005.5 1044 L1015 1061 L1010 1061 Z" fill="#5cb83c"/>
  <path d="M1013 1044 L1018 1044 L1007 1060 L1002 1060 Z" fill="#1f7a3a"/>
  <path d="M1007 1063 L1022 1060 M1009 1065.5 L1023 1063" stroke="#5fb870" stroke-width="1"/>
  <!-- help -->
  <circle cx="1252.8" cy="1056.6" r="13" fill="#fff"/>
  <circle cx="1252.8" cy="1056.6" r="11" fill="#0a98d8"/>
  <path d="M1248 1052.5 Q1248 1047.5 1253 1047.5 Q1258 1047.5 1258 1052 Q1258 1054.5 1255 1056 Q1253.5 1057 1253.5 1059.5" stroke="#fff" stroke-width="2.8" fill="none"/>
  <circle cx="1253" cy="1063.5" r="1.9" fill="#fff"/>
  <circle cx="1263.1" cy="1061.9" r="6.2" fill="#f0b020"/>
  <rect x="1262.2" y="1058.5" width="2" height="7.5" fill="#fff"/>
  <rect x="1262.2" y="1056.8" width="2" height="1.2" fill="#fff"/>
  <!-- weather -->
  <circle cx="1387" cy="1055" r="12.5" fill="url(#sung)"/>
  <circle cx="1394.6" cy="1047.2" r="7.3" fill="#d12b24"/>
  <text x="1394.6" y="1051.3" font-family="Liberation Sans" font-size="10" fill="#fff" text-anchor="middle">1</text>
  <!-- tray -->
  <path d="M1540 1058.7 L1548 1050.8 L1556 1058.7" stroke="#fff" stroke-width="1.2" fill="none"/>
  <rect x="1573" y="1045" width="9" height="15" rx="3" fill="#fff"/>
  <path d="M1571.3 1055 L1571.3 1058 Q1571.3 1063 1577.5 1063 Q1583.8 1063 1583.8 1058 L1583.8 1055" stroke="#fff" stroke-width="1.1" fill="none"/>
  <path d="M1577.5 1063 L1577.5 1064.8 M1574 1064.8 L1581 1064.8" stroke="#fff" stroke-width="1.1"/>
  <path d="M1598.2 1051 L1601.5 1051 L1604.8 1048 L1604.8 1062 L1601.5 1059 L1598.2 1059 Z" stroke="#fff" stroke-width="1.1" fill="none"/>
  <path d="M1608 1053 Q1609.5 1055 1608 1057" stroke="#fff" stroke-width="1.1" fill="none"/>
  <path d="M1611.5 1049.5 Q1614.5 1055 1611.5 1060.5" stroke="#c8c8c8" stroke-width="1" fill="none"/>
  <path d="M1614.5 1046 Q1619.5 1055 1614.5 1064" stroke="#999" stroke-width="1" fill="none"/>
  <path d="M1631 1062.5 A13.5 13.5 0 0 1 1645 1048.3 M1635.3 1062.5 A9.5 9.5 0 0 1 1645 1052.3 M1639.5 1062.5 A5.5 5.5 0 0 1 1645 1056.5" stroke="#fff" stroke-width="1.1" fill="none"/>
  <circle cx="1644.5" cy="1061.5" r="1.3" fill="#fff"/>
  <path d="M1659 1048 L1659 1050 M1662 1048 L1662 1050 M1658 1050.5 L1663 1050.5 L1663 1052 Q1663 1054 1660.5 1054 Q1658 1054 1658 1052 Z M1660.5 1054 L1660.5 1060" stroke="#fff" stroke-width="1" fill="none"/>
  <rect x="1662.5" y="1050.5" width="14" height="10" fill="none" stroke="#fff" stroke-width="1"/>
  <rect x="1677" y="1053.5" width="1.3" height="4" fill="#fff"/>
  <rect x="1663" y="1052.5" width="3.5" height="8" fill="#fff"/>
  <rect x="1688.3" y="1047.3" width="29.5" height="16.2" fill="none" stroke="#fff" stroke-width="1"/>
  <path d="M1692 1051.5 H1714 M1692 1055 H1714 M1692 1059 H1714" stroke="#fff" stroke-width="1" stroke-dasharray="1.5 2"/>
  <rect x="1699" y="1058.5" width="8" height="1" fill="#fff"/>
  <path d="M1869 1045 L1889 1045 L1889 1062 L1881.5 1062 L1879 1064.5 L1876.5 1062 L1869 1062 Z" fill="#fff"/>
  <path d="M1873 1049.5 H1885 M1873 1052.5 H1885 M1873 1055.5 H1880" stroke="#212b31" stroke-width="1"/>
  <rect x="1914" y="1030" width="1" height="50" fill="#5a6268"/>
 </svg>
 <div class="tbt" style="left:109.5px;top:1047px;font-size:18.5px;letter-spacing:1.1px;color:#1a1a1a">Поиск</div>
 <div class="tbt" style="left:1412px;top:1048px;font-size:17.5px;color:#fff">20°C&nbsp; Sunny</div>
 <div class="tbt" style="left:1731px;top:1049px;font-size:14px;letter-spacing:0.5px;color:#fff">УКР</div>
 <div class="tbt" style="left:1794px;top:1036px;font-size:14.6px;color:#fff">10:48</div>
 <div class="tbt" style="left:1776.5px;top:1058px;font-size:14.8px;letter-spacing:-0.4px;color:#fff">26.09.2023</div>
</div>

</body></html>
